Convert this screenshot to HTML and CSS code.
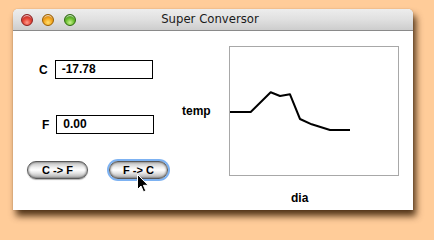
FILE: index.html
```html
<!DOCTYPE html>
<html>
<head>
<meta charset="utf-8">
<link rel="stylesheet" href="styles.css">
</head>
<body>
<div class="window">
  <div class="titlebar">
    <div class="lights">
      <span class="light red"></span>
      <span class="light yellow"></span>
      <span class="light green"></span>
    </div>
    <div class="title">Super Conversor</div>
  </div>
  <div class="content">
    <div class="left">
      <div class="row row-c">
        <span class="lbl">C</span>
        <div class="field">-17.78</div>
      </div>
      <div class="row row-f">
        <span class="lbl">F</span>
        <div class="field">0.00</div>
      </div>
      <div class="buttons">
        <button class="btn">C -&gt; F</button>
        <button class="btn focused">F -&gt; C</button>
      </div>
    </div>
    <div class="ylabel">temp</div>
    <div class="plotcol">
      <div class="plot">
        <svg width="168" height="128" viewBox="0 0 168 128">
          <polyline points="0,65 20.7,65 40.7,45.3 50,49 60,47.3 70,72 81.7,77.3 100,83 120,83" fill="none" stroke="#000" stroke-width="2" stroke-linejoin="round"/>
        </svg>
      </div>
      <div class="xlabel">dia</div>
    </div>
  </div>
  <svg class="cursor" width="12" height="19" viewBox="0 0 12 19">
    <path d="M0.5,0.5 L0.5,15.5 L4,12 L6.5,17.8 L8.8,16.8 L6.4,11.3 L11.2,11.3 Z" fill="#000" stroke="#fff" stroke-width="1"/>
  </svg>
</div>
</body>
</html>
```

FILE: styles.css
```css
html, body {
  margin: 0;
  padding: 0;
}
body {
  width: 434px;
  height: 237px;
  background: #ffcc99;
  overflow: hidden;
  font-family: "Liberation Sans", Arial, sans-serif;
}
.window {
  position: relative;
  margin: 9px 0 0 13px;
  width: 400px;
  height: 201px;
  background: #fff;
  border-radius: 5px 5px 0 0;
  box-shadow: 3px 6px 7px rgba(50, 25, 0, 0.85), 0 0 1px rgba(120, 70, 20, 0.6);
}
.titlebar {
  position: relative;
  height: 21px;
  border-radius: 5px 5px 0 0;
  background: linear-gradient(#ededed, #e0e0e0 50%, #cdcdcd);
  border-bottom: 1px solid #8a8a8a;
  display: flex;
  align-items: center;
}
.lights {
  display: flex;
  gap: 9.5px;
  padding-left: 7.5px;
}
.light {
  width: 12px;
  height: 12px;
  border-radius: 50%;
  box-sizing: border-box;
}
.red {
  background: radial-gradient(circle at 50% 75%, #ff9a8c 0%, #e84c3c 40%, #b01010 90%);
  border: 1px solid #8a2020;
  box-shadow: inset 0 2px 1px -1px rgba(255,255,255,0.8);
}
.yellow {
  background: radial-gradient(circle at 50% 75%, #ffe070 0%, #f4a820 45%, #c06a00 90%);
  border: 1px solid #9a6000;
  box-shadow: inset 0 2px 1px -1px rgba(255,255,255,0.8);
}
.green {
  background: radial-gradient(circle at 50% 75%, #c8f090 0%, #6cc030 45%, #2f7a10 90%);
  border: 1px solid #2f6a10;
  box-shadow: inset 0 2px 1px -1px rgba(255,255,255,0.8);
}
.title {
  position: absolute;
  left: 0;
  right: 6px;
  top: 3px;
  text-align: center;
  font-family: "DejaVu Sans", sans-serif;
  font-size: 11.7px;
  color: #1a1a1a;
}
.content {
  display: flex;
  align-items: flex-start;
  height: 179px;
}
.left {
  width: 169px;
  padding-top: 29px;
}
.row {
  display: flex;
  align-items: center;
  gap: 7px;
}
.row-c {
  padding-left: 26px;
}
.row-f {
  padding-left: 29px;
  margin-top: 36px;
}
.lbl {
  font-weight: bold;
  font-size: 12px;
  color: #000;
}
.field {
  box-sizing: border-box;
  width: 98px;
  height: 19px;
  border: 1px solid #000;
  padding-left: 6px;
  font-weight: bold;
  font-size: 12px;
  line-height: 17px;
  color: #000;
}
.buttons {
  display: flex;
  gap: 21px;
  padding-left: 14px;
  margin-top: 27px;
}
.btn {
  box-sizing: border-box;
  width: 61px;
  height: 18px;
  padding: 0;
  border: 1px solid #5a5a5a;
  border-radius: 9px;
  background: linear-gradient(#bdbdbd, #f2f2f2 35%, #ffffff 50%, #e4e4e4 70%, #a8a8a8);
  box-shadow: inset 1px 0 2px rgba(0,0,0,0.3), inset -1px 0 2px rgba(0,0,0,0.3), 0 1px 1px rgba(0,0,0,0.3);
  font-family: "Liberation Sans", Arial, sans-serif;
  font-weight: bold;
  font-size: 11px;
  color: #000;
  line-height: 16px;
}
.btn.focused {
  width: 59px;
  box-shadow: 0 0 0 2px #7db2f2, inset 1px 0 2px rgba(0,0,0,0.3), inset -1px 0 2px rgba(0,0,0,0.3);
}
.ylabel {
  width: 47px;
  height: 130px;
  margin-top: 15px;
  display: flex;
  align-items: center;
  font-weight: bold;
  font-size: 12px;
  color: #000;
}
.plotcol {
  padding-top: 15px;
}
.plot {
  width: 168px;
  height: 128px;
  border: 1px solid #a8a8a8;
}
.plot svg {
  display: block;
}
.xlabel {
  margin-top: 15px;
  padding-left: 62px;
  font-weight: bold;
  font-size: 12px;
  color: #000;
}
.cursor {
  position: absolute;
  left: 124px;
  top: 165px;
}
```
